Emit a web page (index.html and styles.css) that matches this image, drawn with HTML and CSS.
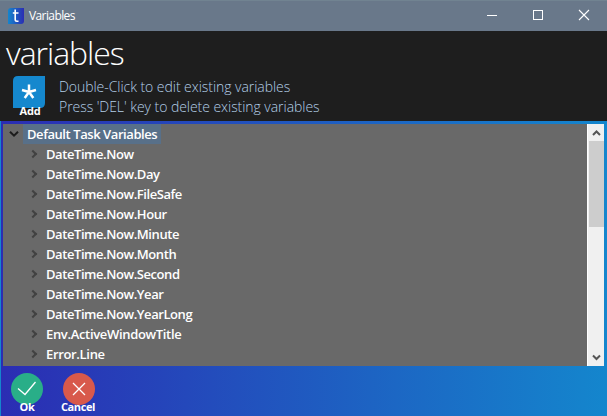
FILE: index.html
```html
<!DOCTYPE html>
<html lang="en">
<head>
<meta charset="utf-8">
<title>Variables</title>
<link rel="stylesheet" href="styles.css">
</head>
<body>
<div class="window">
  <header class="titlebar">
    <svg class="logo" width="16" height="16" viewBox="0 0 16 16">
      <defs><linearGradient id="lg"><stop offset="0" stop-color="#1486cd"/><stop offset="1" stop-color="#2b2db3"/></linearGradient></defs>
      <path d="M3 0H16V13Q16 16 13 16H0V3Q0 0 3 0Z" fill="url(#lg)"/>
      <path d="M7.2 1.500V11.500Q7.200 13.200 8.900 13.200H10.500M4.800 5H10.500" fill="none" stroke="#fff" stroke-width="1.6"/>
    </svg>
    <span class="caption"><span class="t-caption">Variables</span></span>
    <div class="controls">
      <svg width="46" height="31" viewBox="0 0 46 31"><path d="M18 15.5H28" stroke="#fff"/></svg>
      <svg width="46" height="31" viewBox="0 0 46 31"><rect x="18.5" y="10.5" width="9" height="9" fill="none" stroke="#fff"/></svg>
      <svg width="46" height="31" viewBox="0 0 46 31"><path d="M18 10L28 20M28 10L18 20" stroke="#fff" stroke-width="1.1"/></svg>
    </div>
  </header>
  <section class="head">
    <h1><span class="t-heading">variables</span></h1>
    <div class="tools">
      <button class="add">
        <svg width="32" height="32" viewBox="0 0 32 32"><path d="M5 0H32V27Q32 32 27 32H0V5Q0 0 5 0Z" fill="#1588ce"/><path d="M16 16V8.500M16 16L23 14M16 16L20.300 22M16 16L11.700 22M16 16L9 14" stroke="#fff" stroke-width="2.5"/></svg>
        <span class="label">Add</span>
      </button>
      <div class="hints">
        <p>Double-Click to edit existing variables</p>
        <p>Press 'DEL' key to delete existing variables</p>
      </div>
    </div>
  </section>
  <main class="body">
    <div class="list">
      <ul class="tree">
        <li class="root"><svg width="10" height="8" viewBox="0 0 10 8"><path d="M1 1.700L5 5.700L9 1.700" fill="none" stroke="#1c1c1c" stroke-width="2"/></svg><span class="selected">Default Task Variables</span></li>
        <li><i class="chevron"></i><span>DateTime.Now</span></li>
        <li><i class="chevron"></i><span>DateTime.Now.Day</span></li>
        <li><i class="chevron"></i><span>DateTime.Now.FileSafe</span></li>
        <li><i class="chevron"></i><span>DateTime.Now.Hour</span></li>
        <li><i class="chevron"></i><span>DateTime.Now.Minute</span></li>
        <li><i class="chevron"></i><span>DateTime.Now.Month</span></li>
        <li><i class="chevron"></i><span>DateTime.Now.Second</span></li>
        <li><i class="chevron"></i><span>DateTime.Now.Year</span></li>
        <li><i class="chevron"></i><span>DateTime.Now.YearLong</span></li>
        <li><i class="chevron"></i><span class="tight">Env.ActiveWindowTitle</span></li>
        <li><i class="chevron"></i><span class="tight">Error.Line</span></li>
      </ul>
      <div class="scrollbar">
        <svg width="15" height="17" viewBox="0 0 15 17"><path d="M4 11L7.500 7.500L11 11" fill="none" stroke="#555" stroke-width="2"/></svg>
        <div class="thumb"></div>
        <svg class="down" width="15" height="17" viewBox="0 0 15 17"><path d="M4 6.500L7.500 10L11 6.500" fill="none" stroke="#555" stroke-width="2"/></svg>
      </div>
    </div>
    <footer class="actions">
      <button class="action">
        <svg width="32" height="32" viewBox="0 0 32 32"><circle cx="16" cy="16" r="16" fill="#29ae88"/><path d="M7 15.500L14 21.500L24.500 9" fill="none" stroke="#fff" stroke-width="1.3"/></svg>
        <span class="label ok">Ok</span>
      </button>
      <button class="action">
        <svg width="32" height="32" viewBox="0 0 32 32"><circle cx="16" cy="16" r="16" fill="#d8594b"/><path d="M10 10L22 22M22 10L10 22" stroke="#fff" stroke-width="1.3"/></svg>
        <span class="label cancel">Cancel</span>
      </button>
    </footer>
  </main>
</div>
</body>
</html>
```
FILE: styles.css
```css
* { box-sizing: border-box; }
body { margin: 0; font-family: "Open Sans", "Noto Sans", sans-serif; color: #fff; overflow: hidden; }
button { border: 0; padding: 0; background: none; color: inherit; font-family: inherit; }
h1, p, ul { margin: 0; padding: 0; font-weight: 300; }
svg { display: block; flex: none; }
span { white-space: nowrap; }
.window { width: 607px; height: 416px; display: flex; flex-direction: column; background: #1e1e1e; }
.titlebar { height: 31px; flex: none; display: flex; align-items: center; background: #69788a; border-top: 1px solid #718391; padding-left: 8px; }
.logo { margin-top: -1px; }
.caption { margin-left: 5px; font-size: 12px; line-height: 30px; flex: 1; }
.t-caption { letter-spacing: -0.6px; }
.controls { display: flex; margin-top: -1px; }
.head { height: 90px; flex: none; }
.head h1 { font-size: 32px; line-height: 44px; height: 45px; padding-left: 6px; }
.t-heading { letter-spacing: -1.05px; }
.tools { display: flex; padding-left: 13px; }
.add { width: 32px; display: flex; flex-direction: column; align-items: center; }
.label { font-size: 11px; font-weight: 700; line-height: 12px; margin-top: -3px; letter-spacing: -0.2px; }
.add .label { margin-left: 2px; }
.hints { margin-left: 14px; color: #b4cfe8; font-size: 14px; line-height: 20px; padding-top: 1px; letter-spacing: -0.05px; }
.body { flex: 1; border-left: 1px solid #1486cd; background: linear-gradient(90deg, #2b2db3 0%, #1486cd 100%); padding: 3px 3px 0 2px; }
.list { height: 242px; display: flex; background: #696969; }
.tree { flex: 1; list-style: none; font-size: 13px; font-weight: 600; letter-spacing: -0.43px; }
.tree li { height: 20px; line-height: 20px; display: flex; align-items: center; padding-left: 23px; }
.tree .root { padding-left: 6px; }
.tree .tight { letter-spacing: -0.33px; }
.selected { background: #587089; margin-left: 4px; padding: 0 4px; }
.chevron { width: 6px; height: 6px; border: solid #424242; border-width: 2px 2px 0 0; transform: rotate(45deg); margin: 0 10px 0 4px; }
.scrollbar { width: 17px; display: flex; flex-direction: column; align-items: center; background: #f0f0f0; border-left: 1px solid #fff; }
.thumb { width: 15px; height: 86px; background: #cdcdcd; }
.down { margin-top: auto; }
.actions { display: flex; gap: 20px; padding: 7px 0 0 8px; }
.action { width: 32px; display: flex; flex-direction: column; align-items: center; }
.actions .label { margin-top: -4px; }
.actions .cancel { letter-spacing: -0.4px; margin-left: -2px; }
```
